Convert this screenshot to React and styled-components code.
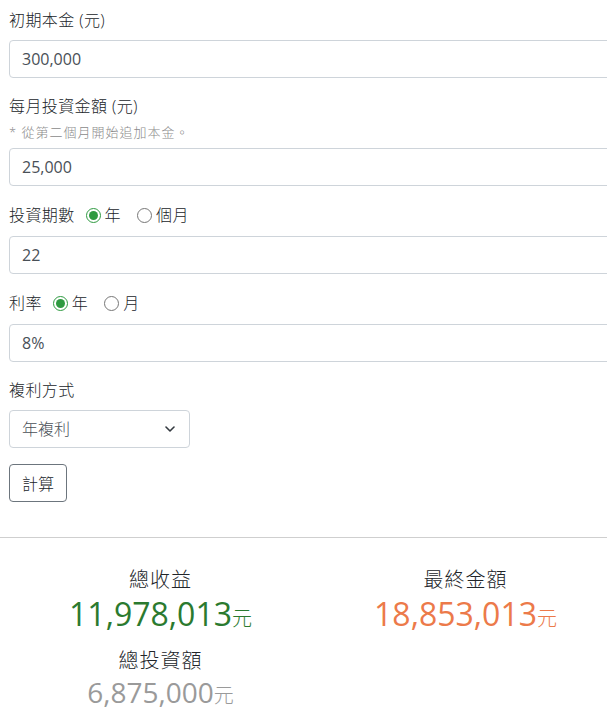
import React from "react";
import styled, { createGlobalStyle } from "styled-components";

const Global = createGlobalStyle`
  html, body { margin: 0; padding: 0; background: #fff; overflow: hidden; }
  body {
    font-family: "Open Sans", "Noto Sans CJK TC", sans-serif;
    color: #212529;
    font-size: 16px;
    line-height: 1.5;
  }
  * { box-sizing: border-box; }
`;

const Page = styled.div`
  width: 640px;
`;

const Form = styled.form`
  padding: 8px 0 0 9px;
  width: 640px;
`;

const Group = styled.div`
  margin-bottom: 16px;
`;

const LabelRow = styled.div`
  display: flex;
  align-items: center;
  height: ${(p) => (p.$radio ? "26px" : "24px")};
  margin-bottom: 8px;
  font-size: 16px;
  font-weight: 300;
  color: #212529;
  letter-spacing: 0.4px;
`;

const Hint = styled.div`
  font-size: 13px;
  font-weight: 300;
  color: #8a8a8a;
  line-height: 18px;
  margin-top: -3px;
  margin-bottom: 7px;
  letter-spacing: 1px;
`;

const RadioLabel = styled.label`
  display: inline-flex;
  align-items: center;
  margin-left: ${(p) => (p.$first ? "11px" : "16px")};
  input {
    margin: 0 4px 0 0;
    width: 15px;
    height: 15px;
    accent-color: #2f9a41;
  }
`;

const TextInput = styled.input`
  display: block;
  width: 100%;
  height: 38px;
  padding: 6px 12px;
  font-family: "Open Sans", "Noto Sans CJK TC", sans-serif;
  font-size: 16px;
  color: #495057;
  border: 1px solid #ced4da;
  border-radius: 4px;
  background: #fff;
  outline: none;
`;

const SelectWrap = styled.div`
  position: relative;
  width: 181px;
`;

const Select = styled.select`
  appearance: none;
  width: 181px;
  height: 38px;
  padding: 6px 12px;
  font-family: "Open Sans", "Noto Sans CJK TC", sans-serif;
  font-size: 16px;
  font-weight: 300;
  color: #495057;
  border: 1px solid #ced4da;
  border-radius: 4px;
  background: #fff;
`;

const Chevron = styled.svg`
  position: absolute;
  right: 15px;
  top: 15px;
  pointer-events: none;
`;

const Button = styled.button`
  height: 38px;
  padding: 0 12px;
  font-family: "Open Sans", "Noto Sans CJK TC", sans-serif;
  font-size: 16px;
  font-weight: 300;
  color: #212529;
  background: #fff;
  border: 1px solid #6c757d;
  border-radius: 4px;
`;

const Divider = styled.hr`
  margin: 35px 0 0;
  border: 0;
  border-top: 1px solid #cfcfcf;
  width: 607px;
`;

const Results = styled.div`
  display: grid;
  grid-template-columns: 305px 305px;
  margin-left: 8px;
  padding-top: 27px;
  row-gap: 13px;
`;

const Stat = styled.div`
  text-align: center;
`;

const StatLabel = styled.div`
  font-size: 20px;
  font-weight: 300;
  line-height: 30px;
  color: #212529;
  letter-spacing: 1px;
`;

const Amount = styled.div`
  font-size: ${(p) => p.$size}px;
  line-height: 1.2;
  color: ${(p) => p.$color};
`;

const Unit = styled.span`
  font-size: 20px;
  font-weight: 300;
`;

const Radio = ({ name, label, checked, first }) => (
  <RadioLabel $first={first}>
    <input type="radio" name={name} defaultChecked={checked} />
    {label}
  </RadioLabel>
);

export default function App() {
  return (
    <Page>
      <Global />
      <Form onSubmit={(e) => e.preventDefault()}>
        <Group>
          <LabelRow>初期本金 (元)</LabelRow>
          <TextInput defaultValue="300,000" />
        </Group>
        <Group>
          <LabelRow>每月投資金額 (元)</LabelRow>
          <Hint>* 從第二個月開始追加本金。</Hint>
          <TextInput defaultValue="25,000" />
        </Group>
        <Group>
          <LabelRow $radio>
            投資期數
            <Radio name="period" label="年" checked first />
            <Radio name="period" label="個月" />
          </LabelRow>
          <TextInput defaultValue="22" />
        </Group>
        <Group>
          <LabelRow $radio>
            利率
            <Radio name="rate" label="年" checked first />
            <Radio name="rate" label="月" />
          </LabelRow>
          <TextInput defaultValue="8%" />
        </Group>
        <Group>
          <LabelRow>複利方式</LabelRow>
          <SelectWrap>
            <Select defaultValue="year">
              <option value="year">年複利</option>
              <option value="month">月複利</option>
            </Select>
            <Chevron width="10" height="8" viewBox="0 0 10 8">
              <path d="M1 2 L5 6 L9 2" fill="none" stroke="#343a40" strokeWidth="1.6" strokeLinecap="round" strokeLinejoin="round" />
            </Chevron>
          </SelectWrap>
        </Group>
        <Button type="submit">計算</Button>
      </Form>
      <Divider />
      <Results>
        <Stat>
          <StatLabel>總收益</StatLabel>
          <Amount $size={32} $color="#2b7a2f">
            11,978,013<Unit>元</Unit>
          </Amount>
        </Stat>
        <Stat>
          <StatLabel>最終金額</StatLabel>
          <Amount $size={32} $color="#ec7a4a">
            18,853,013<Unit>元</Unit>
          </Amount>
        </Stat>
        <Stat>
          <StatLabel>總投資額</StatLabel>
          <Amount $size={28} $color="#9a9a9a">
            6,875,000<Unit>元</Unit>
          </Amount>
        </Stat>
      </Results>
    </Page>
  );
}
